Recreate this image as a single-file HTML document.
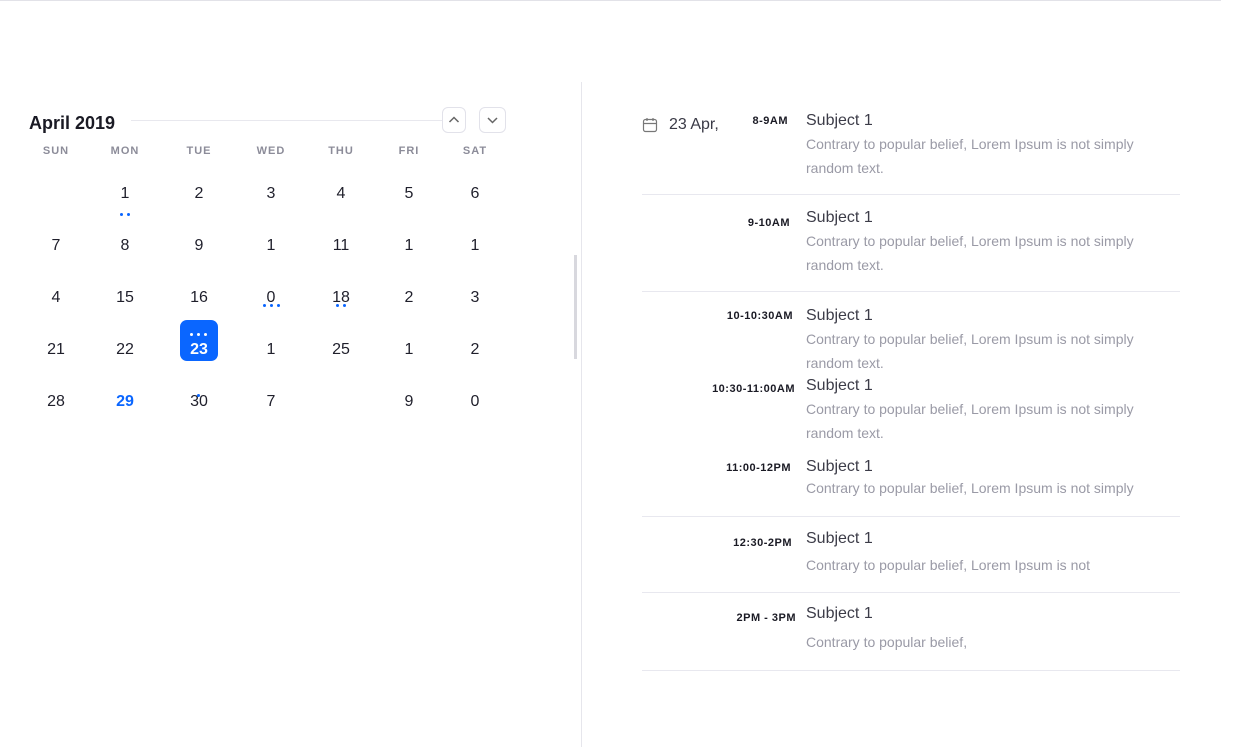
<!DOCTYPE html>
<html><head><style>
body{margin:0;width:1236px;height:747px;position:relative;background:#fff;font-family:"Liberation Sans",sans-serif;overflow:hidden}
.a{position:absolute;white-space:nowrap}
.d{position:absolute;transform:translate(-50%,-50%);font-size:16px;color:#1f1f2b;margin-top:1px}
.h{position:absolute;transform:translateX(-50%);font-size:11px;font-weight:bold;letter-spacing:1px;color:#8c8c99;top:145px}
.dot{position:absolute;width:3px;height:3px;border-radius:50%;background:#0a66ff}
.t{position:absolute;font-size:11px;font-weight:bold;color:#1a1a24;letter-spacing:0.5px;margin-top:1px}
.s{position:absolute;left:806px;font-size:16px;color:#3c3c48}
.p{position:absolute;left:806px;font-size:14px;color:#9a9aa6}
.hr{position:absolute;left:642px;width:538px;height:1px;background:#e8e8ef}
</style></head><body>
<div class="a" style="left:0;top:0;width:1221px;height:1px;background:#e2e2e8"></div>
<div class="a" style="left:581px;top:82px;width:1px;height:665px;background:#e6e6ec"></div>
<div class="a" style="left:574px;top:255px;width:3px;height:104px;background:#d8d8de"></div>
<div class="a" style="left:29px;top:113px;font-size:18px;font-weight:bold;color:#1a1a24">April 2019</div>
<div class="a" style="left:131px;top:120px;width:311px;height:1px;background:#e8e8ee"></div>
<div class="a" style="left:442px;top:107px;width:24px;height:26px;border:1px solid #e2e2ea;border-radius:6px;box-sizing:border-box"><svg width="22" height="24" viewBox="0 0 22 24"><path d="M6.5 14l4.5-4.5 4.5 4.5" fill="none" stroke="#666" stroke-width="1.5"/></svg></div>
<div class="a" style="left:479px;top:107px;width:27px;height:26px;border:1px solid #e2e2ea;border-radius:6px;box-sizing:border-box"><svg width="25" height="24" viewBox="0 0 25 24"><path d="M8 10l4.5 4.5 4.5-4.5" fill="none" stroke="#666" stroke-width="1.5"/></svg></div>
<div class="h" style="left:56px">SUN</div><div class="h" style="left:125px">MON</div><div class="h" style="left:199px">TUE</div><div class="h" style="left:271px">WED</div><div class="h" style="left:341px">THU</div><div class="h" style="left:409px">FRI</div><div class="h" style="left:475px">SAT</div>
<div class="a" style="left:180px;top:320px;width:38px;height:41px;background:#0a66ff;border-radius:7px"></div>
<div class="d" style="left:125px;top:193px">1</div><div class="d" style="left:199px;top:193px">2</div><div class="d" style="left:271px;top:193px">3</div><div class="d" style="left:341px;top:193px">4</div><div class="d" style="left:409px;top:193px">5</div><div class="d" style="left:475px;top:193px">6</div>
<div class="d" style="left:56px;top:245px">7</div><div class="d" style="left:125px;top:245px">8</div><div class="d" style="left:199px;top:245px">9</div><div class="d" style="left:271px;top:245px">1</div><div class="d" style="left:341px;top:245px">11</div><div class="d" style="left:409px;top:245px">1</div><div class="d" style="left:475px;top:245px">1</div>
<div class="d" style="left:56px;top:297px">4</div><div class="d" style="left:125px;top:297px">15</div><div class="d" style="left:199px;top:297px">16</div><div class="d" style="left:271px;top:297px">0</div><div class="d" style="left:341px;top:297px">18</div><div class="d" style="left:409px;top:297px">2</div><div class="d" style="left:475px;top:297px">3</div>
<div class="d" style="left:56px;top:349px">21</div><div class="d" style="left:125px;top:349px">22</div><div class="d" style="left:199px;top:349px;color:#fff;font-weight:bold">23</div><div class="d" style="left:271px;top:349px">1</div><div class="d" style="left:341px;top:349px">25</div><div class="d" style="left:409px;top:349px">1</div><div class="d" style="left:475px;top:349px">2</div>
<div class="d" style="left:56px;top:401px">28</div><div class="d" style="left:125px;top:401px;color:#0a66ff;font-weight:bold">29</div><div class="d" style="left:199px;top:401px">30</div><div class="d" style="left:271px;top:401px">7</div><div class="d" style="left:409px;top:401px">9</div><div class="d" style="left:475px;top:401px">0</div>
<div class="dot" style="left:120px;top:213px"></div><div class="dot" style="left:127px;top:213px"></div>
<div class="dot" style="left:263px;top:304px"></div><div class="dot" style="left:270px;top:304px"></div><div class="dot" style="left:277px;top:304px"></div>
<div class="dot" style="left:336px;top:304px"></div><div class="dot" style="left:343px;top:304px"></div>
<div class="dot" style="background:#fff;left:190px;top:333px"></div><div class="dot" style="background:#fff;left:197px;top:333px"></div><div class="dot" style="background:#fff;left:204px;top:333px"></div>
<div class="dot" style="left:197px;top:394px"></div>
<svg class="a" style="left:642px;top:117px" width="16" height="16" viewBox="0 0 16 16"><rect x="1.5" y="2.5" width="13" height="12" rx="2" fill="none" stroke="#777" stroke-width="1.2"/><path d="M1.5 6.5h13M5 1v3M11 1v3" stroke="#777" stroke-width="1.2"/></svg>
<div class="a" style="left:669px;top:116px;font-size:16px;color:#3a3a46">23 Apr,</div>
<div class="t" style="top:114px;right:448px">8-9AM</div>
<div class="t" style="top:216px;right:446px">9-10AM</div>
<div class="t" style="top:309px;right:443px">10-10:30AM</div>
<div class="t" style="top:382px;right:441px">10:30-11:00AM</div>
<div class="t" style="top:461px;right:445px">11:00-12PM</div>
<div class="t" style="top:536px;right:444px">12:30-2PM</div>
<div class="t" style="top:611px;right:440px">2PM - 3PM</div>
<div class="s" style="top:112px">Subject 1</div>
<div class="p" style="top:132px;line-height:24px">Contrary to popular belief, Lorem Ipsum is not simply<br>random text.</div>
<div class="hr" style="top:194px"></div>
<div class="s" style="top:209px">Subject 1</div>
<div class="p" style="top:229px;line-height:24px">Contrary to popular belief, Lorem Ipsum is not simply<br>random text.</div>
<div class="hr" style="top:291px"></div>
<div class="s" style="top:307px">Subject 1</div>
<div class="p" style="top:327px;line-height:24px">Contrary to popular belief, Lorem Ipsum is not simply<br>random text.</div>
<div class="s" style="top:377px">Subject 1</div>
<div class="p" style="top:397px;line-height:24px">Contrary to popular belief, Lorem Ipsum is not simply<br>random text.</div>
<div class="s" style="top:458px">Subject 1</div>
<div class="p" style="top:480px">Contrary to popular belief, Lorem Ipsum is not simply</div>
<div class="hr" style="top:516px"></div>
<div class="s" style="top:530px">Subject 1</div>
<div class="p" style="top:557px">Contrary to popular belief, Lorem Ipsum is not</div>
<div class="hr" style="top:592px"></div>
<div class="s" style="top:605px">Subject 1</div>
<div class="p" style="top:634px">Contrary to popular belief,</div>
<div class="hr" style="top:670px"></div>
</body></html>
